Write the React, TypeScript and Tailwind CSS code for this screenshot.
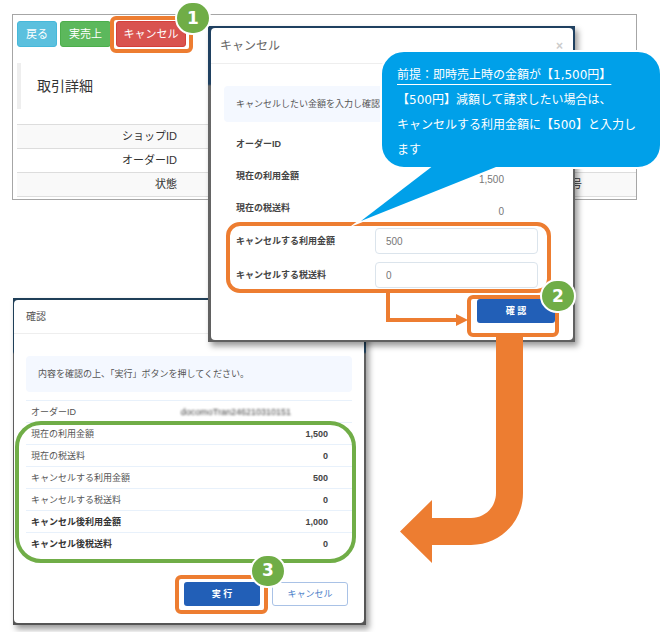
import type { ReactNode } from 'react';

const sans = "font-['Liberation_Sans','Noto_Sans_CJK_JP',sans-serif]";

function StepBadge({ n, place }: { n: number; place: string }) {
  return (
    <span
      className={`absolute z-30 flex h-[34px] w-9 items-center justify-center rounded-full border-2 border-white bg-[#70ad47] font-['DejaVu_Sans',sans-serif] text-[17px] leading-none font-bold text-white ${place}`}
    >
      {n}
    </span>
  );
}

function Frame({ place }: { place: string }) {
  return <span className={`pointer-events-none absolute z-10 border-4 border-[#ed7d31] ${place}`} />;
}

function Notice({ children }: { children: ReactNode }) {
  return (
    <p className="flex h-9 items-center overflow-hidden rounded-sm bg-[#f4f8ff] px-3 whitespace-nowrap text-[#555]">
      {children}
    </p>
  );
}

function TransactionPage() {
  const labels: [string, string][] = [
    ['ショップID', ''],
    ['オーダーID', ''],
    ['状態', '号'],
  ];
  return (
    <section className="mr-[27px] ml-3 border border-[#a6a6a6] bg-white pt-1.5 pb-0.5 pl-1 text-[#333]">
      <div className="flex text-[11px] leading-6 text-white">
        <button className="mr-[3px] h-[26px] w-10 rounded-[3px] border border-[#46b8da] bg-[#5bc0de]">戻る</button>
        <button className="mr-[5px] h-[26px] w-[51px] rounded-[3px] border border-[#4cae4c] bg-[#5cb85c]">実売上</button>
        <div className="relative">
          <button className="h-[26px] w-[70px] rounded-[3px] border border-[#d43f3a] bg-[#d9534f]">キャンセル</button>
          <Frame place="-top-[5px] -right-[7px] -bottom-1.5 -left-1.5 rounded-md" />
          <StepBadge n={1} place="-top-5 left-[59px]" />
        </div>
      </div>
      <h1 className="mt-4 flex h-[46px] items-center border-l-4 border-[#eee] pl-4 text-[14px]">取引詳細</h1>
      <table className="mt-[15px] w-full table-fixed border-collapse text-right text-[11px] leading-[23px]">
        <tbody>
          {labels.map(([first, second]) => (
            <tr key={first} className="h-6 border-y border-[#ddd] odd:bg-[#f9f9f9]">
              <th className="w-40 font-normal">{first}</th>
              <td />
              <th className="w-[120px] font-normal">{second}</th>
              <td className="w-[54px]" />
            </tr>
          ))}
        </tbody>
      </table>
    </section>
  );
}

function AmountField({ id, label, value }: { id: string; label: string; value: string }) {
  return (
    <div className="flex h-[34px] items-center pl-3">
      <label htmlFor={id} className="w-[139px] font-bold text-[#444]">
        {label}
      </label>
      <input
        id={id}
        defaultValue={value}
        className="h-[26px] w-[163px] rounded border border-[#dbe4ec] bg-white px-2.5 text-[10px] text-[#777] outline-none"
      />
    </div>
  );
}

function CancelDialog() {
  const current = [
    ['オーダーID', ''],
    ['現在の利用金額', '1,500'],
    ['現在の税送料', '0'],
  ];
  return (
    <section
      role="dialog"
      aria-labelledby="cancel-title"
      className="absolute top-[26px] left-[208px] w-[367px] bg-[linear-gradient(#1f4060_0,#1f4060_58px,#686868_60px,#606060_100%)] pt-0.5 pr-0.5 pb-0.5 pl-[3px] shadow-[3px_4px_6px_rgba(0,0,0,0.4)]"
    >
      <div className="rounded bg-white text-[9px] leading-4">
        <header className="flex h-9 items-center justify-between border-b border-[#eee] pr-2.5 pl-[9px]">
          <h2 id="cancel-title" className="text-[12px] text-[#666]">キャンセル</h2>
          <button aria-label="閉じる" className="text-[12px] font-bold text-[#ccc]">×</button>
        </header>
        <form className="px-[13px] pt-[22px] pb-[17px]">
          <Notice>キャンセルしたい金額を入力し確認</Notice>
          <dl className="mt-1.5">
            {current.map(([label, value]) => (
              <div key={label} className="flex h-8 items-center pl-3">
                <dt className="w-[139px] font-bold text-[#444]">{label}</dt>
                <dd className="w-[163px] pt-2 pr-[34px] text-right text-[10px] text-[#777]">{value}</dd>
              </div>
            ))}
          </dl>
          <div className="relative">
            <AmountField id="amount" label="キャンセルする利用金額" value="500" />
            <AmountField id="tax" label="キャンセルする税送料" value="0" />
            <Frame place="-top-0.5 right-[9px] -bottom-px left-0.5 rounded-[14px]" />
          </div>
          <div className="mt-[7px] flex justify-end pr-[5px]">
            <div className="relative">
              <button type="button" className="block h-6 w-[78px] rounded-[3px] bg-[#225fb7] font-bold text-white">
                確 認
              </button>
              <Frame place="-top-1 -right-1 -bottom-3.5 -left-2.5 rounded-md" />
              <StepBadge n={2} place="-top-5 left-[63px]" />
            </div>
          </div>
        </form>
      </div>
    </section>
  );
}

function ConfirmDialog() {
  const rows: [string, string, boolean][] = [
    ['現在の利用金額', '1,500', false],
    ['現在の税送料', '0', false],
    ['キャンセルする利用金額', '500', false],
    ['キャンセルする税送料', '0', false],
    ['キャンセル後利用金額', '1,000', true],
    ['キャンセル後税送料', '0', true],
  ];
  return (
    <section
      role="dialog"
      aria-labelledby="confirm-title"
      className="absolute top-[298px] left-[13px] w-[353px] bg-[linear-gradient(#1f3f58_0,#1f3f58_54px,#606060_56px,#555_100%)] pt-0.5 pr-0.5 pb-0.5 pl-px shadow-[3px_4px_6px_rgba(0,0,0,0.4)]"
    >
      <div className="rounded bg-white text-[9px] leading-4 text-[#555]">
        <header className="flex h-[34px] items-center border-b border-[#eee] px-3">
          <h2 id="confirm-title" className="text-[10px]">確認</h2>
        </header>
        <div className="px-3 pt-[22px] pb-[17px]">
          <Notice>内容を確認の上、「実行」ボタンを押してください。</Notice>
          <div className="relative mt-2">
            <table className="w-full border-collapse">
              <tbody>
                <tr className="h-[22px] border-y border-[#e8f1fb]">
                  <th className="pl-[5px] text-left font-normal">オーダーID</th>
                  <td className="pr-[61px] text-right text-[#444]">
                    <span className="blur-[1px]">docomoTran246210310151</span>
                  </td>
                </tr>
                {rows.map(([label, value, strong]) => (
                  <tr key={label} className="h-[22px] border-b border-[#e8f1fb] last:border-0">
                    <th className={`pl-[5px] text-left ${strong ? 'font-bold text-[#333]' : 'font-normal'}`}>{label}</th>
                    <td className="pr-6 text-right font-bold text-[#444]">{value}</td>
                  </tr>
                ))}
              </tbody>
            </table>
            <span className="pointer-events-none absolute top-[21px] -right-1 -bottom-2 -left-[11px] rounded-[26px] border-4 border-[#70ad47]" />
          </div>
          <div className="mt-[27px] flex justify-end gap-3 pr-1">
            <div className="relative">
              <button className="block h-6 w-[76px] rounded-[3px] bg-[#225fb7] font-bold text-white">実 行</button>
              <Frame place="-top-[7px] -right-2 -bottom-2 -left-[9px] rounded-md" />
              <StepBadge n={3} place="-top-7 left-[66px]" />
            </div>
            <button className="h-6 w-[76px] rounded-[3px] border border-[#a9c2e6] bg-white text-[#4d7fc9]">キャンセル</button>
          </div>
        </div>
      </div>
    </section>
  );
}

function Arrows() {
  return (
    <svg className="pointer-events-none absolute top-0 left-0 z-10" width="664" height="632" fill="#ed7d31" aria-hidden="true">
      <path d="M388 293V320H457" fill="none" stroke="#ed7d31" strokeWidth="4" />
      <path d="M456 314L468 320L456 326Z" />
      <path d="M496 336H523V493C523 522 500 545 471 545H432V563L400 531.5L432 500V518H471C485 518 496 507 496 493Z" />
    </svg>
  );
}

function Callout() {
  return (
    <>
      <aside className="absolute top-[50px] left-[380px] z-20 rounded-[24px] border-2 border-white bg-[#00a0e9] pt-[11px] pr-3 pb-1 pl-[15px] font-['DejaVu_Sans','Noto_Sans_CJK_JP',sans-serif] text-[12px] leading-[25px] text-white">
        <p className="w-[251px] whitespace-nowrap">
          <span className="underline underline-offset-[5px]">前提：即時売上時の金額が【1,500円】</span>
          <br />
          【500円】減額して請求したい場合は、
          <br />
          キャンセルする利用金額に【500】と入力し
          <br />
          ます
        </p>
      </aside>
      <svg className="pointer-events-none absolute top-[160px] left-[345px] z-20" width="170" height="75" aria-hidden="true">
        <path d="M86 8L14 62L149 8" fill="none" stroke="#fff" strokeWidth="3" strokeMiterlimit="10" />
        <path d="M89 5L16 61L156 5Z" fill="#00a0e9" />
      </svg>
    </>
  );
}

export default function App() {
  return (
    <main className={`relative min-h-[632px] overflow-hidden bg-white pt-[14px] ${sans}`}>
      <TransactionPage />
      <ConfirmDialog />
      <CancelDialog />
      <Arrows />
      <Callout />
    </main>
  );
}
